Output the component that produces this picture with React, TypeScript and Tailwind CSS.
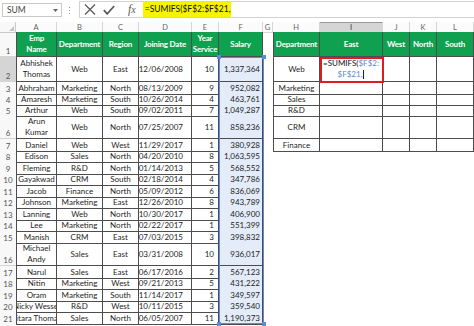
import React from 'react';

const GRID =
  'grid grid-cols-[16px_41px_46px_36px_53px_27px_44px_10px_47px_63px_27px_27px_37px]';

type R = [number, string, string[], string, string, string, string, string];

const data: R[] = [
  [2, 'h-[25px]', ['Abhishek', 'Thomas'], 'Web', 'East', '12/06/2008', '10', '1,337,364'],
  [3, 'h-[11px]', ['Abhraham'], 'Marketing', 'North', '08/13/2009', '9', '952,082'],
  [4, 'h-[11px]', ['Amaresh'], 'Marketing', 'South', '10/26/2014', '4', '463,761'],
  [5, 'h-[12px]', ['Arthur'], 'Web', 'South', '09/02/2011', '7', '1,049,287'],
  [6, 'h-[23px]', ['Arun', 'Kumar'], 'Web', 'North', '07/25/2007', '11', '858,236'],
  [7, 'h-[11px]', ['Daniel'], 'Web', 'West', '11/29/2017', '1', '380,928'],
  [8, 'h-[12px]', ['Edison'], 'Sales', 'North', '04/20/2010', '8', '1,063,595'],
  [9, 'h-[11px]', ['Fleming'], 'R&D', 'North', '01/14/2013', '5', '568,552'],
  [10, 'h-[12px]', ['Gayakwad'], 'CRM', 'South', '02/18/2014', '4', '347,786'],
  [11, 'h-[11px]', ['Jacob'], 'Finance', 'North', '05/09/2012', '6', '836,069'],
  [12, 'h-[12px]', ['Johnson'], 'Marketing', 'East', '12/26/2010', '8', '943,789'],
  [13, 'h-[11px]', ['Lanning'], 'Web', 'North', '10/30/2017', '1', '406,900'],
  [14, 'h-[12px]', ['Lee'], 'Marketing', 'North', '02/22/2017', '1', '551,399'],
  [15, 'h-[11px]', ['Manish'], 'CRM', 'East', '07/03/2015', '3', '398,832'],
  [16, 'h-[24px]', ['Michael', 'Andy'], 'Sales', 'East', '03/31/2008', '10', '936,017'],
  [17, 'h-[11px]', ['Narul'], 'Sales', 'East', '06/17/2016', '2', '567,123'],
  [18, 'h-[12px]', ['Nitin'], 'Marketing', 'West', '09/21/2013', '5', '431,222'],
  [19, 'h-[11px]', ['Oram'], 'Marketing', 'South', '11/14/2017', '1', '349,597'],
  [20, 'h-[12px]', ['Nicky Wessel'], 'R&D', 'West', '10/11/2015', '3', '359,540'],
  [21, 'h-[11px]', ['Sitara Thomas'], 'Sales', 'North', '06/05/2007', '11', '1,190,373'],
];

const rightLabels: Record<number, string> = {
  2: 'Web',
  3: 'Marketing',
  4: 'Sales',
  5: 'R&D',
  6: 'CRM',
  7: 'Finance',
};

const TB = 'border-r border-b border-[#4d4d4d]';
const CENTER = 'flex items-center justify-center text-center overflow-hidden whitespace-nowrap';
const GREEN = `bg-[#0fa14f] text-white font-bold tracking-[-0.2px] ${TB} ${CENTER} leading-[11px]`;

function RowHead({ n, sel }: { n: number | string; sel?: boolean }) {
  return (
    <div
      className={`flex items-end justify-center border-b border-[#d4d4d4] text-[8px] leading-[10px] text-[#555] ${
        sel ? 'bg-[#d5d5d5]' : 'bg-[#f8f8f8]'
      }`}
    >
      {n}
    </div>
  );
}

function DataRow({ r }: { r: R }) {
  const [n, h, name, dept, reg, date, yrs, sal] = r;
  const label = rightLabels[n];
  return (
    <div className={`${GRID} ${h}`}>
      <RowHead n={n} sel={n === 2} />
      <div className={`${TB} border-l ${CENTER} flex-col leading-[11px]`}>
        {name.map((t) => (
          <span key={t}>{t}</span>
        ))}
      </div>
      <div className={`${TB} ${CENTER}`}>{dept}</div>
      <div className={`${TB} ${CENTER}`}>{reg}</div>
      <div className={`${TB} flex items-center justify-end pr-[8px] whitespace-nowrap`}>{date}</div>
      <div className={`${TB} flex items-center justify-end pr-[4px]`}>{yrs}</div>
      <div className={`${TB} flex items-center justify-end pr-[2px] bg-[#e4ecf9]`}>{sal}</div>
      <div />
      {label ? (
        <>
          <div className={`${TB} border-l ${CENTER}`}>{label}</div>
          {n === 2 ? (
            <div className={`${TB} flex flex-col items-center justify-center leading-[11px] whitespace-nowrap`}>
              <span>
                <span className="text-[#111]">=SUMIFS(</span>
                <span className="text-[#5a8ad6]">$F$2:</span>
              </span>
              <span className="flex items-center">
                <span className="text-[#5a8ad6]">$F$21,</span>
                <span className="ml-[1px] inline-block w-px h-[9px] bg-[#222]" />
              </span>
            </div>
          ) : (
            <div className={TB} />
          )}
          <div className={TB} />
          <div className={TB} />
          <div className={TB} />
        </>
      ) : (
        <>
          <div />
          <div />
          <div />
          <div />
          <div />
        </>
      )}
    </div>
  );
}

export default function App() {
  const letters = ['A', 'B', 'C', 'D', 'E', 'F', 'G', 'H', 'I', 'J', 'K', 'L'];
  return (
    <div className="relative w-[474px] h-[326px] overflow-hidden bg-white font-['Lato',sans-serif] text-[8px] text-[#1e1e1e]">
      {/* formula bar */}
      <div className="h-[22px] flex items-start">
        <div className="ml-[2px] mt-[3px] w-[60px] h-[14px] border border-[#c8c8c8] flex items-center justify-between pl-[4px] pr-[3px] text-[8.5px] text-[#444]">
          <span>SUM</span>
          <svg width="5" height="3" viewBox="0 0 5 3">
            <path d="M0 0 L5 0 L2.5 3 Z" fill="#666" />
          </svg>
        </div>
        <div className="ml-[7px] mt-[7px] flex flex-col gap-[2px]">
          <span className="block w-px h-px bg-[#9a9a9a]" />
          <span className="block w-px h-px bg-[#9a9a9a]" />
          <span className="block w-px h-px bg-[#9a9a9a]" />
        </div>
        <div className="ml-[9px] mt-[1px] h-[17px] flex-1 border-l border-t border-b border-[#d2d2d2] flex items-center">
          <svg className="ml-[4px]" width="12" height="11" viewBox="0 0 12 11">
            <path d="M1 0.5 L11 10.5 M11 0.5 L1 10.5" stroke="#5b5b5b" strokeWidth="1.3" />
          </svg>
          <svg className="ml-[7px]" width="12" height="10" viewBox="0 0 12 10">
            <path d="M0.8 5.2 L4.2 8.8 L11.2 1" stroke="#5b5b5b" strokeWidth="1.8" fill="none" />
          </svg>
          <span className="ml-[13px] font-['Liberation_Serif',serif] italic text-[12px] leading-[12px] text-[#5b5b5b]">
            f<span className="text-[10px]">x</span>
          </span>
          <div className="ml-[7px] h-[15px] w-[88px] bg-[#f8f400] flex items-center pl-[2px] text-[8.5px] text-[#111] whitespace-nowrap">
            =SUMIFS($F$2:$F$21,
          </div>
        </div>
      </div>

      {/* column letters */}
      <div className={`${GRID} h-[10px] text-[7.5px] leading-[9px] text-[#666]`}>
        <div className="relative border-r border-b border-[#c9c9c9] bg-[#f8f8f8]">
          <svg className="absolute right-[1px] bottom-[1px]" width="5" height="5" viewBox="0 0 5 5">
            <path d="M5 0 L5 5 L0 5 Z" fill="#c4c4c4" />
          </svg>
        </div>
        {letters.map((l) => (
          <div
            key={l}
            className={`flex items-center justify-center border-r border-b border-[#d6d6d6] ${
              l === 'I' ? 'bg-[#d5d5d5] text-[#333] border-t border-t-[#9a9a9a]' : 'bg-[#fbfbfb]'
            }`}
          >
            {l}
          </div>
        ))}
      </div>

      {/* header row 1 */}
      <div className={`${GRID} h-[25px]`}>
        <RowHead n={1} />
        <div className={`${GREEN} border-l flex-col`}>
          <span>Emp</span>
          <span>Name</span>
        </div>
        <div className={GREEN}>Department</div>
        <div className={GREEN}>Region</div>
        <div className={GREEN}>Joining Date</div>
        <div className={`${GREEN} flex-col`}>
          <span>Year</span>
          <span>Service</span>
        </div>
        <div className={GREEN}>Salary</div>
        <div />
        <div className={`${GREEN} border-l`}>Department</div>
        <div className={GREEN}>East</div>
        <div className={GREEN}>West</div>
        <div className={GREEN}>North</div>
        <div className={GREEN}>South</div>
      </div>

      {data.map((r) => (
        <DataRow key={r[0]} r={r} />
      ))}

      <div className={`${GRID} h-[3px]`}>
        <div className="bg-[#f8f8f8]" />
      </div>

      {/* selection of salary range */}
      <div className="absolute left-[219px] top-[57px] w-[45px] h-[267px] border border-[#5b8bd9]" />
      <div className="absolute left-[217px] top-[55px] w-[4px] h-[4px] bg-[#5b8bd9]" />
      <div className="absolute left-[262px] top-[55px] w-[4px] h-[4px] bg-[#5b8bd9]" />
      <div className="absolute left-[217px] top-[322px] w-[4px] h-[4px] bg-[#5b8bd9]" />
      <div className="absolute left-[262px] top-[322px] w-[4px] h-[4px] bg-[#5b8bd9]" />

      {/* active cell I2 */}
      <div className="absolute left-[320px] top-[57px] w-[64px] h-[26px] border-2 border-[#e21c1c]" />
    </div>
  );
}
